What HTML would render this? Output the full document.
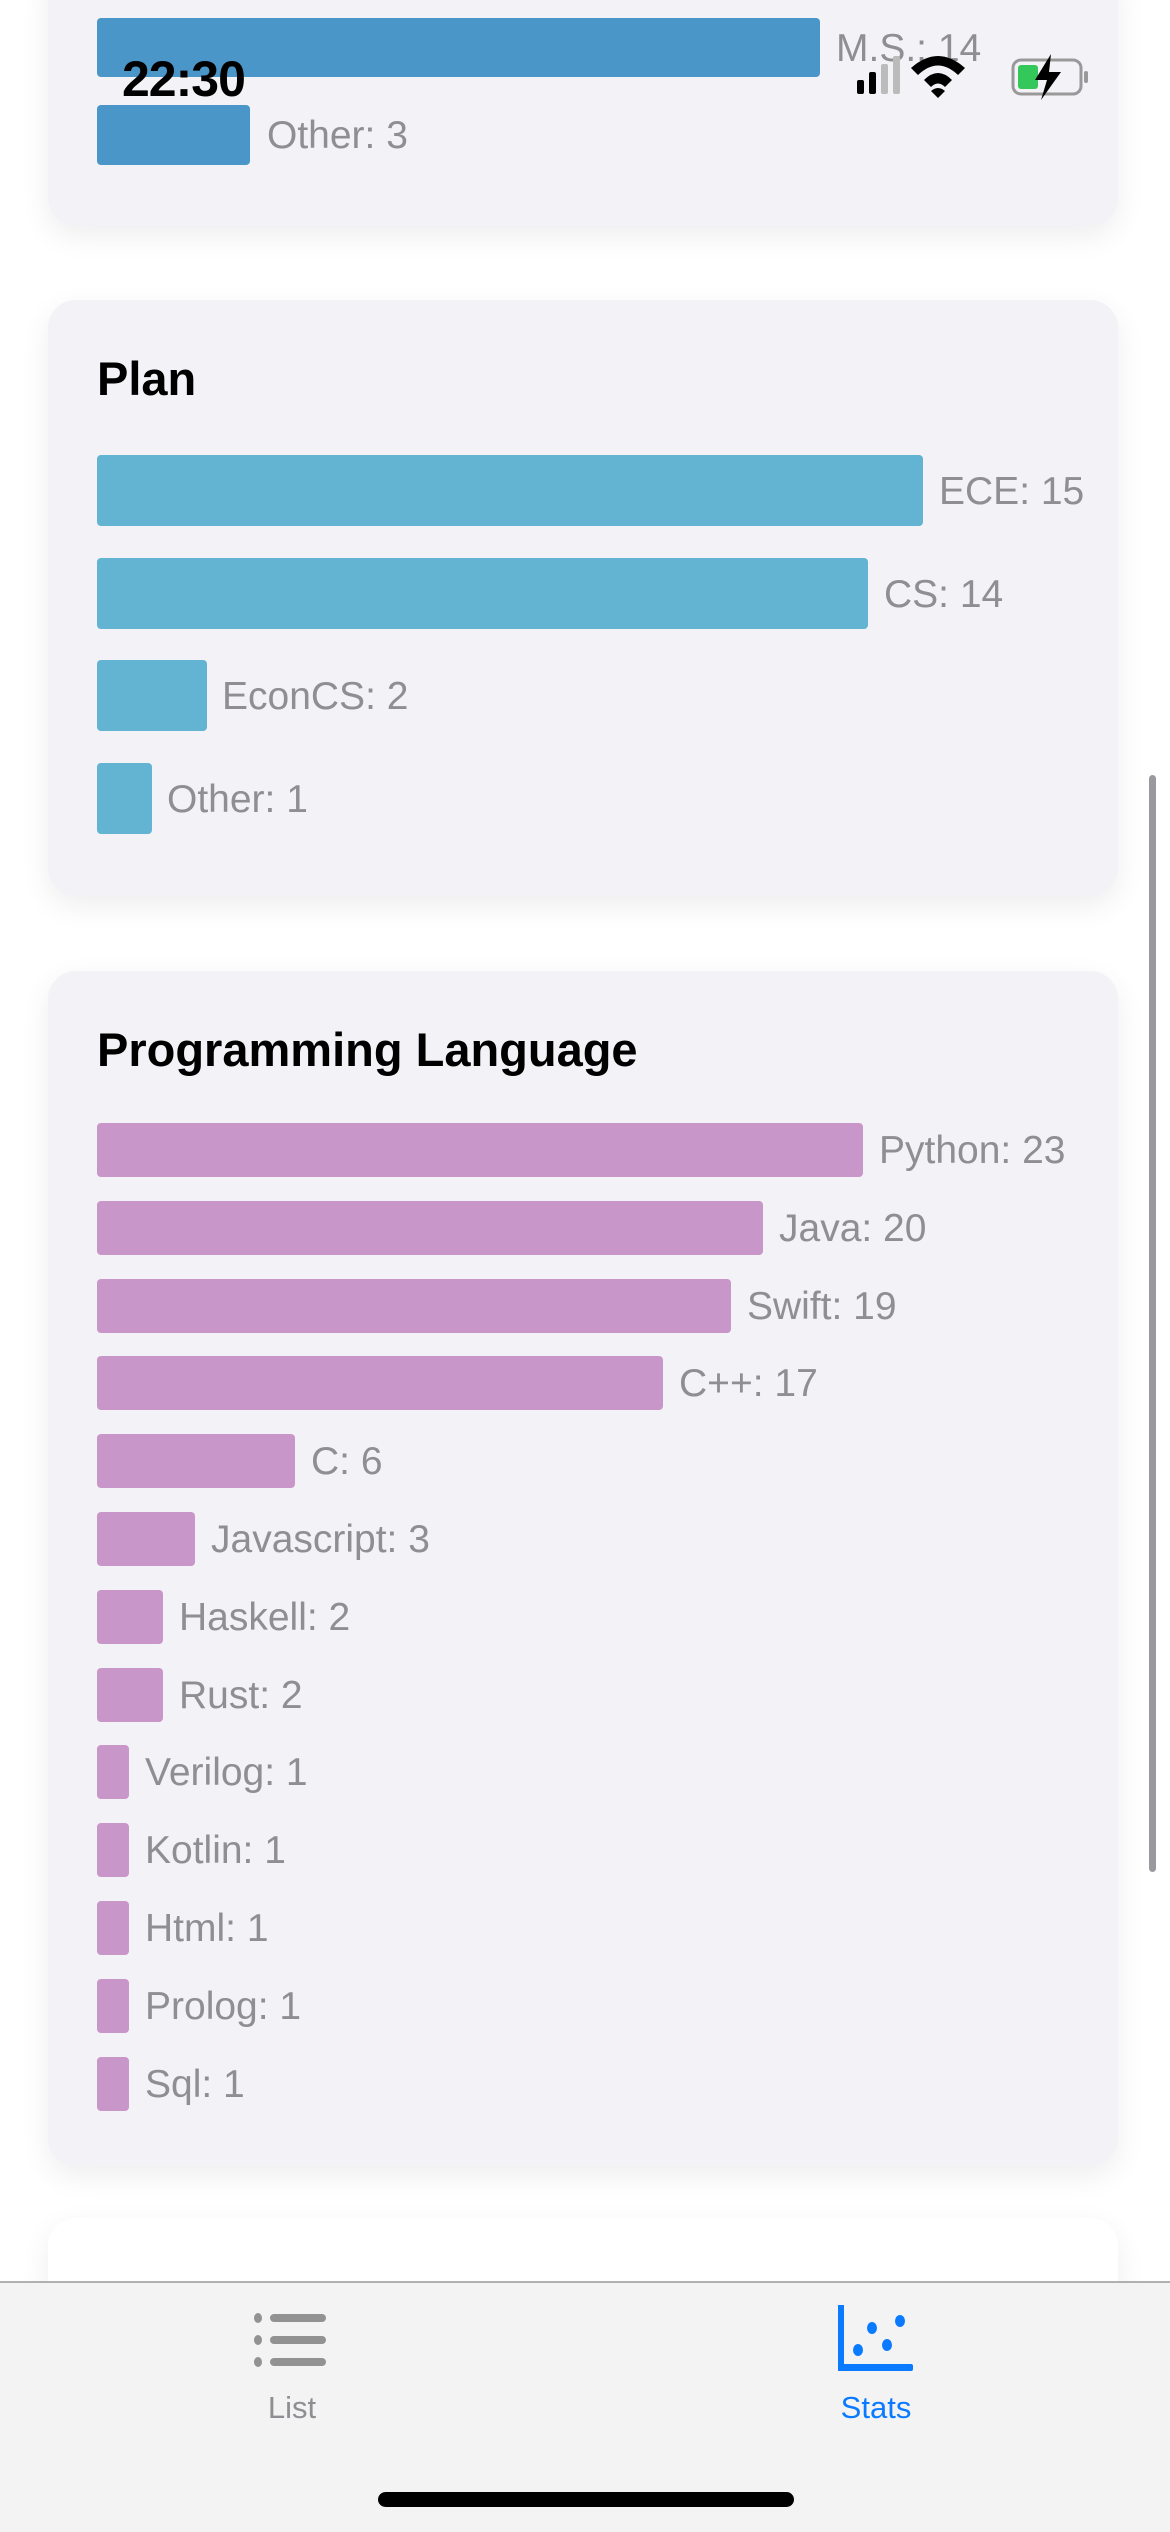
<!DOCTYPE html>
<html style="overflow:hidden;height:2532px"><head><meta charset="utf-8"><style>
body{margin:0;width:1170px;height:2532px;background:#fff;position:relative;overflow:hidden;font-family:"Liberation Sans",sans-serif}
.card{position:absolute;left:48px;width:1070px;background:#f2f2f7;border-radius:28px;box-shadow:0 10px 30px rgba(0,0,0,0.07)}
.bar{position:absolute;left:97px;border-radius:4px}
.lbl{position:absolute;color:#8e8e93;font-size:39px;line-height:1;white-space:nowrap}
.title{position:absolute;left:97px;font-size:47px;font-weight:bold;color:#000;line-height:1;white-space:nowrap}
</style></head><body>
<div class="card" style="top:-40px;height:266px"></div>
<div class="bar" style="top:18px;width:723px;height:59px;background:#4a96c8"></div>
<div class="lbl" style="left:836px;top:29px">M.S.: 14</div>
<div class="bar" style="top:105px;width:153px;height:60px;background:#4a96c8"></div>
<div class="lbl" style="left:267px;top:116px">Other: 3</div>

<div class="card" style="top:300px;height:596px"></div>
<div class="title" style="top:355px">Plan</div>
<div class="bar" style="top:455px;width:826px;height:71px;background:#62b4d2"></div>
<div class="lbl" style="left:939px;top:472px">ECE: 15</div>
<div class="bar" style="top:558px;width:771px;height:71px;background:#62b4d2"></div>
<div class="lbl" style="left:884px;top:575px">CS: 14</div>
<div class="bar" style="top:660px;width:110px;height:71px;background:#62b4d2"></div>
<div class="lbl" style="left:222px;top:677px">EconCS: 2</div>
<div class="bar" style="top:763px;width:55px;height:71px;background:#62b4d2"></div>
<div class="lbl" style="left:167px;top:780px">Other: 1</div>

<div class="card" style="top:971px;height:1195px"></div>
<div class="title" style="top:1026px">Programming Language</div>
<div style="position:absolute;left:0;top:1123px;width:1170px">
<div class="bar" style="top:0;width:766px;height:54px;background:#c996c9"></div><div class="lbl" style="left:879px;top:8px">Python: 23</div>
<div class="bar" style="top:78px;width:666px;height:54px;background:#c996c9"></div><div class="lbl" style="left:779px;top:86px">Java: 20</div>
<div class="bar" style="top:156px;width:634px;height:54px;background:#c996c9"></div><div class="lbl" style="left:747px;top:164px">Swift: 19</div>
<div class="bar" style="top:233px;width:566px;height:54px;background:#c996c9"></div><div class="lbl" style="left:679px;top:241px">C++: 17</div>
<div class="bar" style="top:311px;width:198px;height:54px;background:#c996c9"></div><div class="lbl" style="left:311px;top:319px">C: 6</div>
<div class="bar" style="top:389px;width:98px;height:54px;background:#c996c9"></div><div class="lbl" style="left:211px;top:397px">Javascript: 3</div>
<div class="bar" style="top:467px;width:66px;height:54px;background:#c996c9"></div><div class="lbl" style="left:179px;top:475px">Haskell: 2</div>
<div class="bar" style="top:545px;width:66px;height:54px;background:#c996c9"></div><div class="lbl" style="left:179px;top:553px">Rust: 2</div>
<div class="bar" style="top:622px;width:32px;height:54px;background:#c996c9"></div><div class="lbl" style="left:145px;top:630px">Verilog: 1</div>
<div class="bar" style="top:700px;width:32px;height:54px;background:#c996c9"></div><div class="lbl" style="left:145px;top:708px">Kotlin: 1</div>
<div class="bar" style="top:778px;width:32px;height:54px;background:#c996c9"></div><div class="lbl" style="left:145px;top:786px">Html: 1</div>
<div class="bar" style="top:856px;width:32px;height:54px;background:#c996c9"></div><div class="lbl" style="left:145px;top:864px">Prolog: 1</div>
<div class="bar" style="top:934px;width:32px;height:54px;background:#c996c9"></div><div class="lbl" style="left:145px;top:942px">Sql: 1</div>
</div>

<div class="card" style="top:2218px;height:300px;background:#fff"></div>
<div class="title" style="top:2278px;font-weight:normal">Total Image Size: 2.58 MB</div>

<div style="position:absolute;left:1149px;top:775px;width:7px;height:1097px;border-radius:4px;background:#9a9a9e"></div>

<div style="position:absolute;left:0;top:2281px;width:1170px;height:251px;background:#f3f3f4;border-top:2px solid #b0b0b0"></div>
<svg style="position:absolute;left:252px;top:2310px" width="78" height="60" viewBox="0 0 78 60">
<g fill="#929292"><ellipse cx="6" cy="8" rx="4" ry="5"/><ellipse cx="6" cy="30" rx="4" ry="5"/><ellipse cx="6" cy="52" rx="4" ry="5"/>
<rect x="18" y="4" width="56" height="8" rx="4"/><rect x="18" y="26" width="56" height="8" rx="4"/><rect x="18" y="48" width="56" height="8" rx="4"/></g></svg>
<div style="position:absolute;left:252px;top:2390px;width:80px;text-align:center;font-size:31px;color:#8e8e93">List</div>
<svg style="position:absolute;left:838px;top:2305px" width="76" height="66" viewBox="0 0 76 66">
<g fill="#0a7aff"><rect x="0" y="0" width="6" height="66"/><rect x="0" y="59" width="75" height="7" rx="2"/>
<ellipse cx="20" cy="45" rx="5" ry="6"/><ellipse cx="34" cy="23" rx="5" ry="6"/><ellipse cx="49" cy="40" rx="5" ry="6"/><ellipse cx="62" cy="16" rx="5" ry="6"/></g></svg>
<div style="position:absolute;left:826px;top:2390px;width:100px;text-align:center;font-size:31px;color:#0a7aff">Stats</div>
<div style="position:absolute;left:378px;top:2492px;width:416px;height:15px;border-radius:8px;background:#000"></div>

<div style="position:absolute;left:122px;top:50px;font-size:50px;font-weight:bold;color:#000;letter-spacing:-1px">22:30</div>
<svg style="position:absolute;left:855px;top:52px" width="240" height="48" viewBox="0 0 240 48">
<rect x="2" y="28" width="7" height="14" rx="2" fill="#000"/><rect x="14" y="20" width="7" height="22" rx="2" fill="#000"/>
<rect x="26" y="12" width="7" height="30" rx="2" fill="#bbb"/><rect x="38" y="4" width="7" height="38" rx="2" fill="#bbb"/>
<path d="M56 16 Q83 -8 110 16 L103 23 Q83 4 63 23Z M69 28 Q83 14 97 28 L90 35 Q83 28 76 35Z M83 46 L76 39 Q83 33 90 39Z" fill="#000"/>
<rect x="158" y="8" width="68" height="34" rx="8" fill="none" stroke="#999" stroke-width="3"/>
<rect x="163" y="13" width="20" height="24" rx="3" fill="#34c759"/>
<rect x="229" y="19" width="4" height="12" rx="2" fill="#999"/>
<path d="M196 2 L180 28 L192 28 L186 48 L206 20 L194 20 Z" fill="#000"/>
</svg>
</body></html>
